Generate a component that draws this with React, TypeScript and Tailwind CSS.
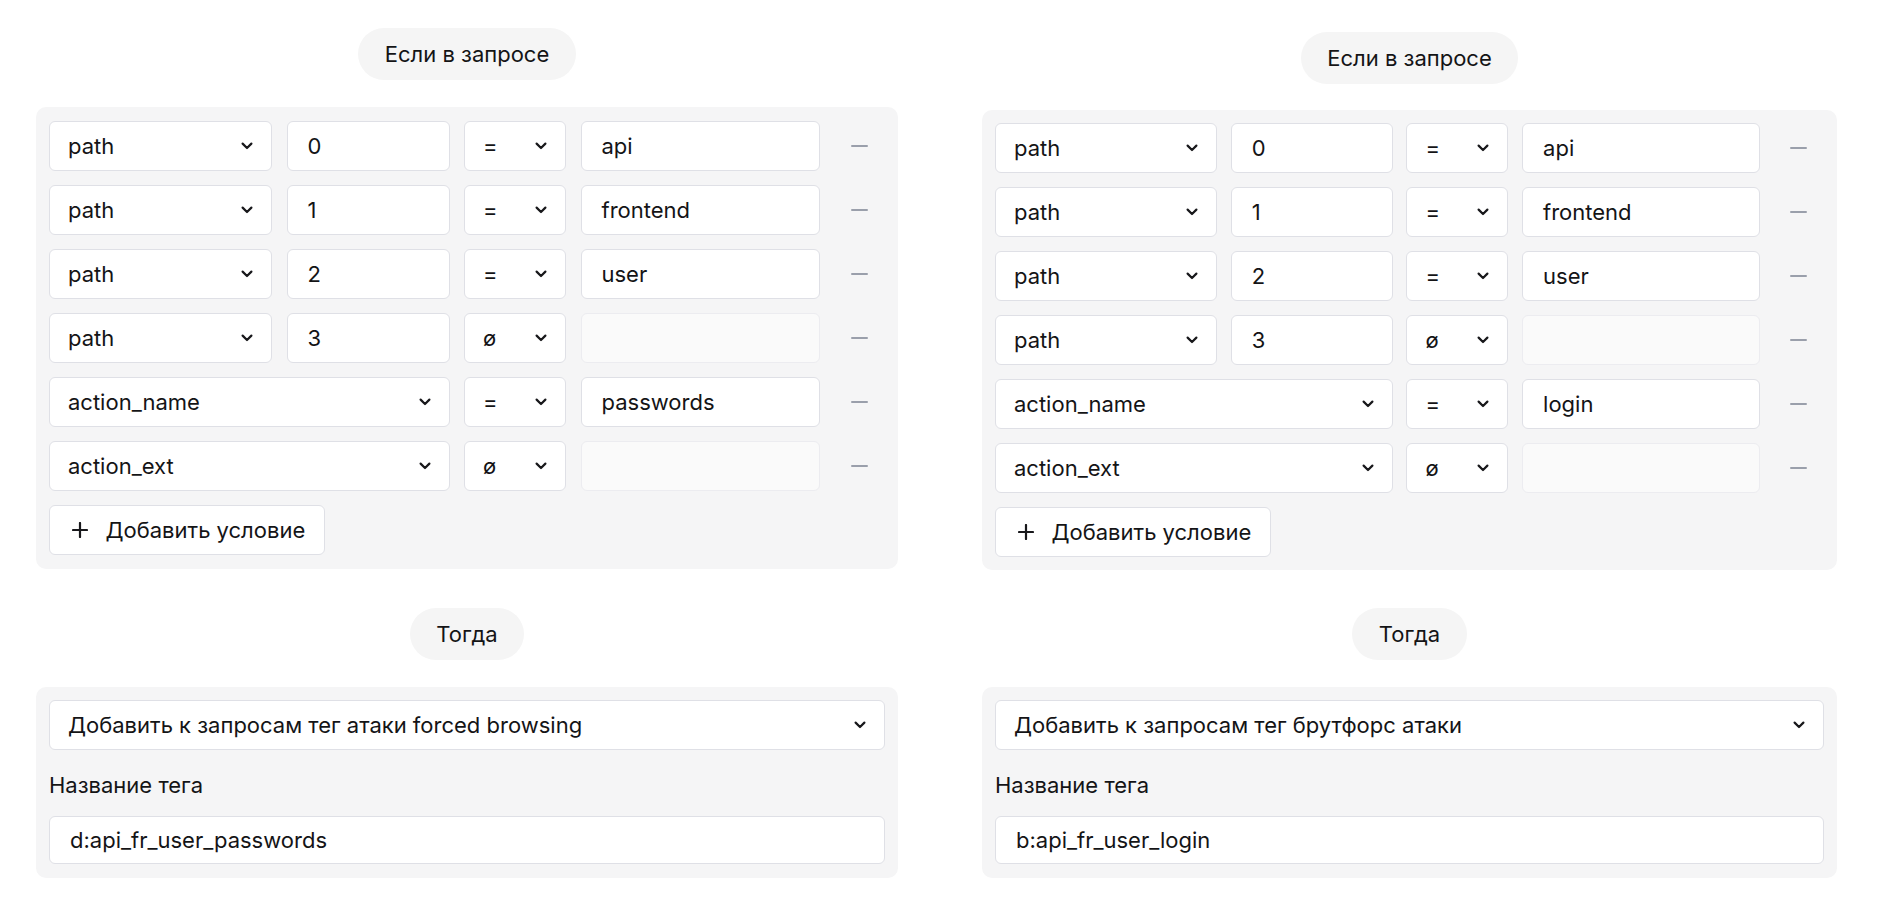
type Row = {
  field: string;
  index?: string;
  op: "=" | "ø";
  value?: string;
};

type Variant = {
  width: string;
  cols: string;
  panelPad: string;
  pillTop: string;
  panelTop: string;
  thenTop: string;
};

const leftVariant: Variant = {
  width: "w-[862px]",
  cols: "grid-cols-[223px_163px_102px_239px_1fr] gap-x-[14.5px]",
  panelPad: "pt-[14px] pb-[14px]",
  pillTop: "mt-[28px]",
  panelTop: "mt-[27px]",
  thenTop: "mt-[39px]",
};

const rightVariant: Variant = {
  width: "w-[855px]",
  cols: "grid-cols-[222px_162px_102px_238px_1fr] gap-x-[13.7px]",
  panelPad: "pt-[13px] pb-[13px]",
  pillTop: "mt-[32px]",
  panelTop: "mt-[26px]",
  thenTop: "mt-[38px]",
};

function Chevron() {
  return (
    <svg width="12" height="8" viewBox="0 0 12 8" className="shrink-0">
      <path
        d="M1.6 1.6 L6 6 L10.4 1.6"
        fill="none"
        stroke="#18181b"
        strokeWidth="2.2"
        strokeLinecap="round"
        strokeLinejoin="round"
      />
    </svg>
  );
}

function PlusIcon() {
  return (
    <svg width="16" height="16" viewBox="0 0 16 16" className="shrink-0">
      <path d="M8 1 V15 M1 8 H15" stroke="#18181b" strokeWidth="2.2" strokeLinecap="round" />
    </svg>
  );
}

function Select({ label, className }: { label: string; className: string }) {
  return (
    <div
      className={`flex shrink-0 items-center justify-between rounded-[6px] border-[1.5px] border-[#dfe0e6] bg-white pl-[18px] pr-[18px] ${className}`}
    >
      <span>{label}</span>
      <Chevron />
    </div>
  );
}

function Field({ value, disabled = false }: { value?: string; disabled?: boolean }) {
  return (
    <div
      className={
        disabled
          ? "flex h-[50px] items-center rounded-[6px] border-[1.5px] border-[#ececf0] bg-[#fafafa] pl-[20px]"
          : "flex h-[50px] items-center rounded-[6px] border-[1.5px] border-[#dfe0e6] bg-white pl-[20px]"
      }
    >
      {value}
    </div>
  );
}

function Pill({ text, className }: { text: string; className: string }) {
  return (
    <div
      className={`flex h-[52px] shrink-0 items-center rounded-full bg-[#f5f5f5] px-[26.5px] ${className}`}
    >
      {text}
    </div>
  );
}

function Rule({
  rows,
  action,
  tag,
  v,
}: {
  rows: Row[];
  action: string;
  tag: string;
  v: Variant;
}) {
  return (
    <div className={`flex flex-col items-center ${v.width}`}>
      <Pill text="Если в запросе" className={v.pillTop} />

      <div
        className={`flex w-full shrink-0 flex-col gap-y-[14px] rounded-[10px] bg-[#f5f5f6] px-[13px] ${v.panelPad} ${v.panelTop}`}
      >
        {rows.map((row, i) => (
          <div key={i} className={`grid h-[50px] shrink-0 ${v.cols}`}>
            {row.index !== undefined ? (
              <>
                <Select label={row.field} className="h-[50px]" />
                <Field value={row.index} />
              </>
            ) : (
              <Select label={row.field} className="col-span-2 h-[50px]" />
            )}
            <Select label={row.op} className="h-[50px]" />
            <Field value={row.value} disabled={row.op === "ø"} />
            <div className="flex items-center justify-center">
              <div className="h-[2px] w-[17px] rounded-full bg-[#9a9fab]" />
            </div>
          </div>
        ))}

        <button className="flex h-[50px] shrink-0 items-center gap-[17.5px] self-start rounded-[6px] border-[1.5px] border-[#dfe0e6] bg-white pl-[22px] pr-[19px]">
          <PlusIcon />
          <span>Добавить условие</span>
        </button>
      </div>

      <Pill text="Тогда" className={v.thenTop} />

      <div className="mt-[27px] flex w-full shrink-0 flex-col rounded-[10px] bg-[#f5f5f6] px-[13px] pt-[13px] pb-[14px]">
        <Select label={action} className="h-[50px]" />
        <div className="mt-[20px] h-[30px] shrink-0 leading-[30px]">Название тега</div>
        <div className="mt-[16px] flex h-[48px] shrink-0 items-center rounded-[6px] border-[1.5px] border-[#dfe0e6] bg-white pl-[20px]">
          {tag}
        </div>
      </div>
    </div>
  );
}

const baseRows = (last: string): Row[] => [
  { field: "path", index: "0", op: "=", value: "api" },
  { field: "path", index: "1", op: "=", value: "frontend" },
  { field: "path", index: "2", op: "=", value: "user" },
  { field: "path", index: "3", op: "ø" },
  { field: "action_name", op: "=", value: last },
  { field: "action_ext", op: "ø" },
];

export default function App() {
  return (
    <div className="flex items-start gap-[84px] bg-white pl-[36px] font-[Inter,sans-serif] text-[22px] text-[#141416]">
      <Rule
        rows={baseRows("passwords")}
        action="Добавить к запросам тег атаки forced browsing"
        tag="d:api_fr_user_passwords"
        v={leftVariant}
      />
      <Rule
        rows={baseRows("login")}
        action="Добавить к запросам тег брутфорс атаки"
        tag="b:api_fr_user_login"
        v={rightVariant}
      />
    </div>
  );
}
